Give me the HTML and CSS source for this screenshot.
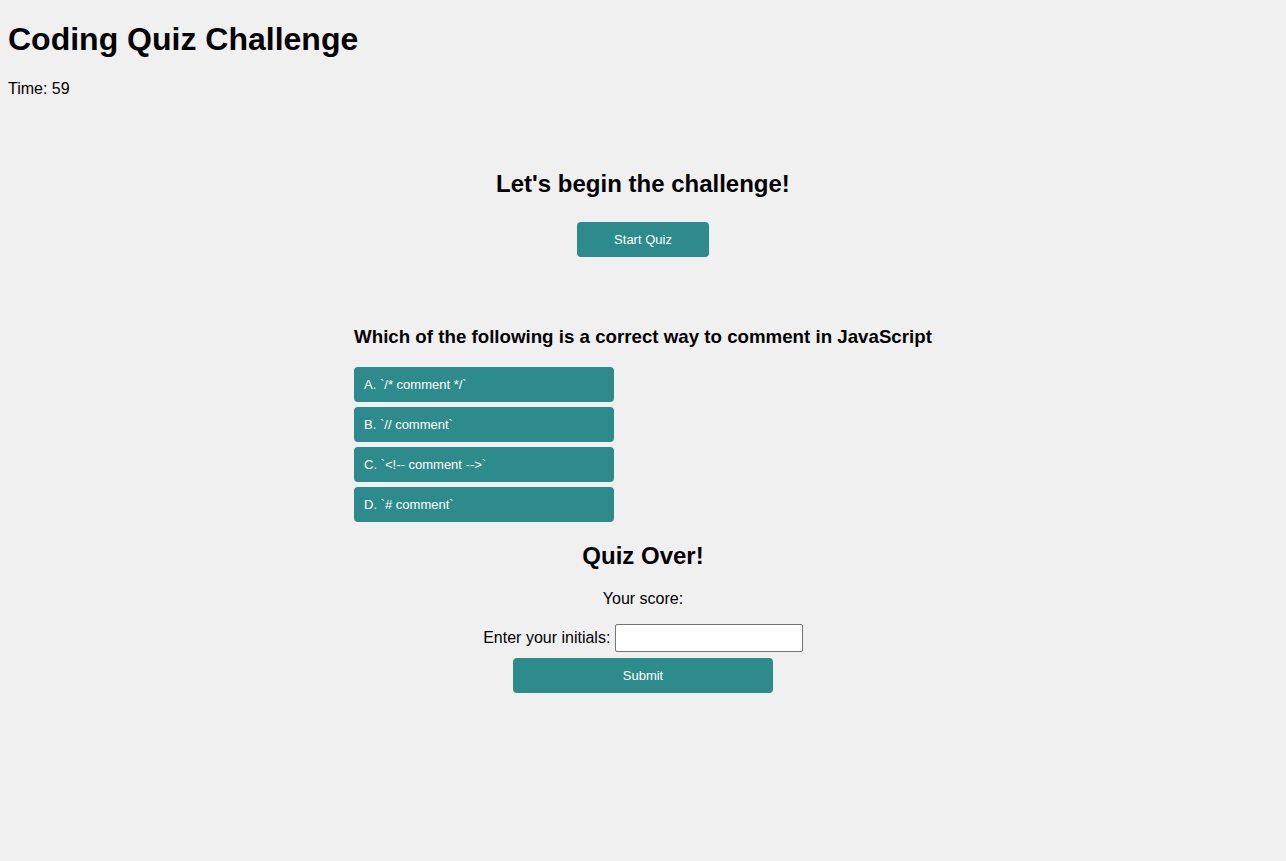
FILE: index.html
```html
<!DOCTYPE html>
<html lang="en">
<head>
<meta charset="UTF-8">
<title>Coding Quiz Challenge</title>
<link rel="stylesheet" href="styles.css">
</head>
<body>
  <header class="header">
    <h1 class="title">Coding Quiz Challenge</h1>
    <p class="timer">Time: <span>59</span></p>
  </header>

  <section class="start">
    <h2 class="start-title">Let's begin the challenge!</h2>
    <button class="btn btn-start">Start Quiz</button>
  </section>

  <section class="quiz">
    <h3 class="question">Which of the following is a correct way to comment in JavaScript</h3>
    <div class="options">
      <button class="btn option">A. `/* comment */`</button>
      <button class="btn option">B. `// comment`</button>
      <button class="btn option">C. `&lt;!-- comment --&gt;`</button>
      <button class="btn option">D. `# comment`</button>
    </div>
  </section>

  <section class="end">
    <h2 class="end-title">Quiz Over!</h2>
    <p class="score">Your score: <span></span></p>
    <div class="initials-row">
      <label for="initials">Enter your initials:</label> <input id="initials" class="initials" type="text">
    </div>
    <button class="btn btn-submit">Submit</button>
  </section>
</body>
</html>
```

FILE: styles.css
```css
html {
  background: #f0f0f0;
}

body {
  margin: 0;
  padding: 8px;
  background: #f0f0f0;
  color: #000;
  font-family: "Liberation Sans", Arial, sans-serif;
  font-size: 16px;
}

.title {
  font-size: 32px;
  font-weight: bold;
  margin: 13.44px 0 21.44px;
}

.timer {
  margin: 16px 0;
}

.start {
  text-align: center;
  padding-top: 56px;
}

.start-title {
  font-size: 24px;
  font-weight: bold;
  margin: 0;
}

.btn {
  display: block;
  background: #2e8b8b;
  color: #fff;
  border: none;
  border-radius: 4px;
  height: 35px;
  font-family: "Liberation Sans", Arial, sans-serif;
  font-size: 13px;
  padding: 0;
  cursor: pointer;
}

.btn-start {
  width: 132px;
  margin: 24px auto 0;
}

.quiz {
  width: fit-content;
  margin: 0 auto;
  padding-top: 69px;
}

.question {
  font-size: 18.72px;
  font-weight: bold;
  margin: 0 0 19px;
}

.options {
  display: flex;
  flex-direction: column;
  align-items: flex-start;
  gap: 5px;
}

.option {
  width: 260px;
  text-align: left;
  padding-left: 10px;
}

.end {
  text-align: center;
  padding-top: 20px;
}

.end-title {
  font-size: 24px;
  font-weight: bold;
  margin: 0 0 19.92px;
}

.score {
  margin: 0 0 16px;
}

.initials-row {
  text-align: center;
}

.initials {
  box-sizing: border-box;
  width: 188px;
  height: 28px;
  border: 1px solid #767676;
  border-radius: 2px;
  background: #fff;
  font-size: 13.33px;
  font-family: "Liberation Sans", Arial, sans-serif;
  padding: 1px 4px;
  vertical-align: baseline;
}

.btn-submit {
  width: 260px;
  margin: 6px auto 0;
}
```
